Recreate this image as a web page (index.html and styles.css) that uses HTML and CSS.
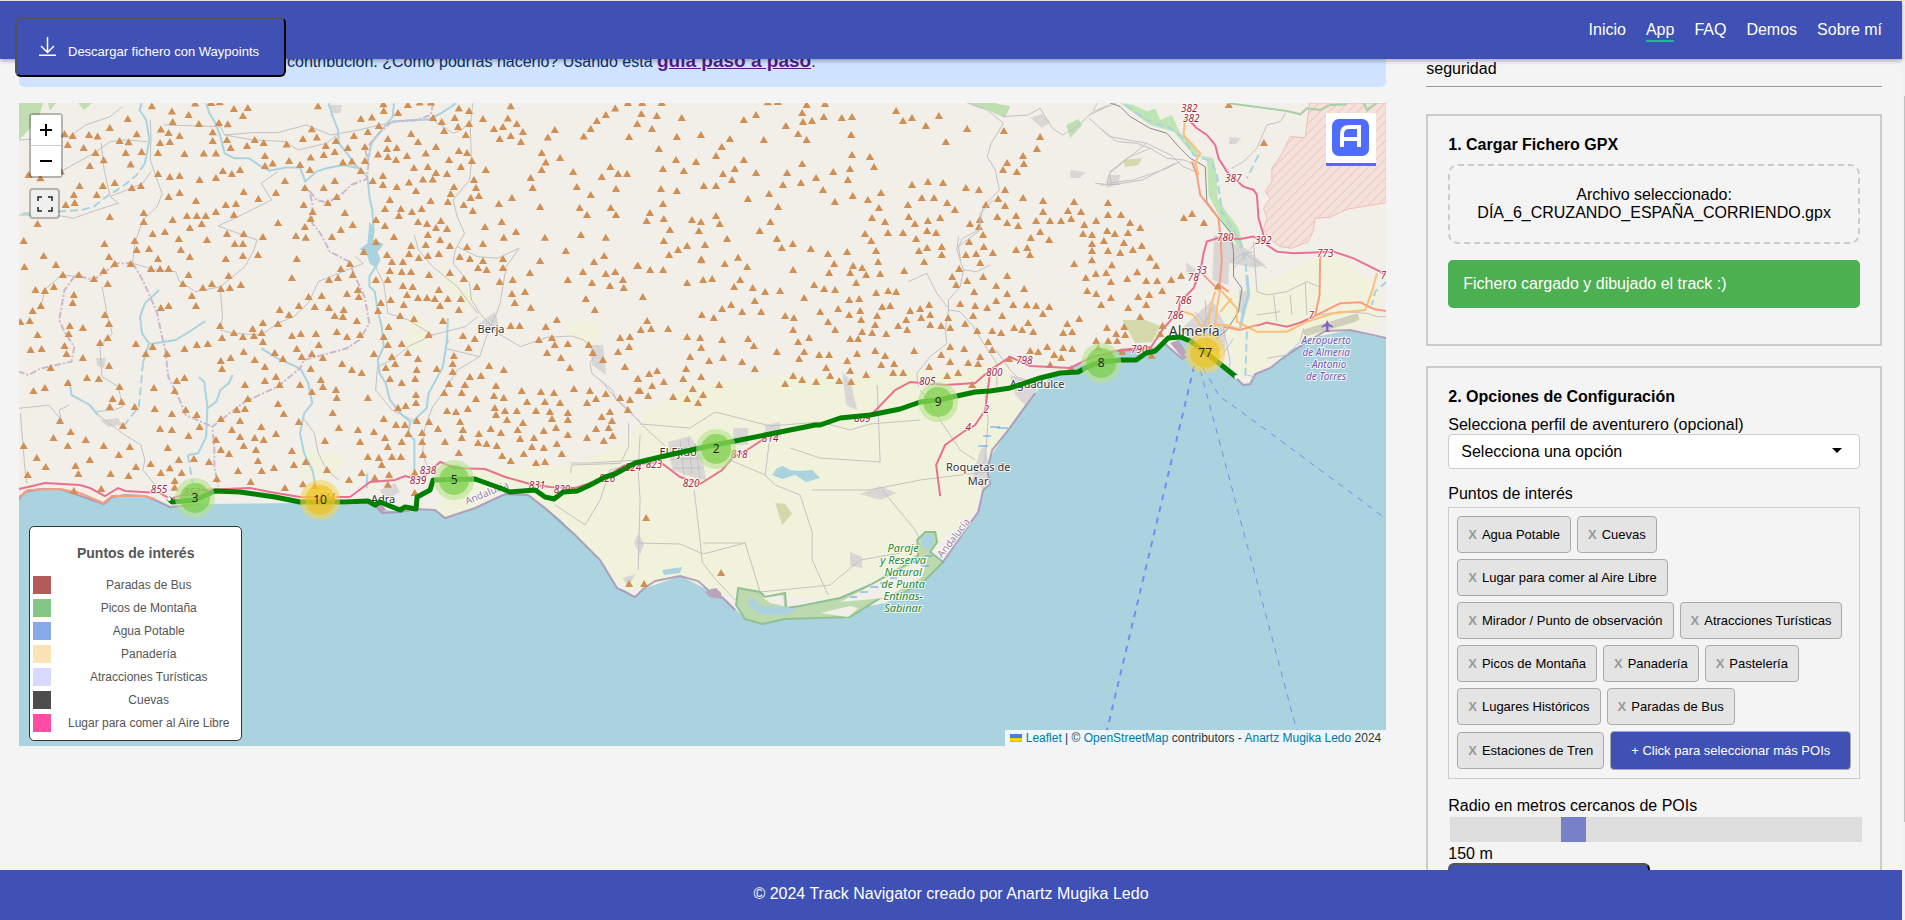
FILE: index.html
```html
<!DOCTYPE html>
<html lang="es">
<head>
<meta charset="utf-8">
<title>Track Navigator</title>
<link rel="stylesheet" href="styles.css">
</head>
<body>
<header class="topbar">
  <button class="btn download" type="button">
    <svg class="download-icon" viewBox="0 0 17 19" aria-hidden="true"><path d="M8.5 0V15M2 9L8.5 15.500L15 9M0 18.200H17"/></svg>
    <span>Descargar fichero con Waypoints</span>
  </button>
  <nav class="nav">
    <a href="#inicio">Inicio</a>
    <a href="#app" class="active">App</a>
    <a href="#faq">FAQ</a>
    <a href="#demos">Demos</a>
    <a href="#sobre">Sobre mí</a>
  </nav>
</header>

<main class="layout">
  <section class="left">
    <div class="notice">contribución. ¿Cómo podrías hacerlo? Usando esta <a href="#guia">guía paso a paso</a>.</div>
    <div class="map">
      <svg class="map-canvas" viewBox="19 103 1367 643" preserveAspectRatio="xMidYMid slice" role="img" aria-label="Mapa del track">
        <defs>
          <marker id="peakA" markerUnits="userSpaceOnUse" markerWidth="24" markerHeight="24" overflow="visible"><path class="peak" d="M0 -11L10 10H-10Z"/></marker>
          <marker id="peakC" markerUnits="userSpaceOnUse" markerWidth="24" markerHeight="24" overflow="visible"><path class="peak" d="M0 -11L12 10H-12Z"/></marker>
          <marker id="peakP" markerUnits="userSpaceOnUse" markerWidth="8" markerHeight="8" overflow="visible"><path class="peak" d="M0 -4L4 3H-4Z"/></marker>
          <pattern id="hatch" width="20" height="20" patternUnits="userSpaceOnUse" patternTransform="rotate(45)"><rect width="20" height="20" fill="#f2e2da"/><rect width="3" height="20" fill="#f5c4c0"/></pattern>
        </defs>
        <rect class="sea" x="19" y="103" width="1367" height="643"/>
        <path class="land" d="M19 103H1386V338L1375 337L1350 330L1325 331L1305 343L1290 350L1280 360L1270 368L1255 374L1250 384L1243 385L1235 377L1222 366L1205 356L1190 341L1176 339L1186 356L1182 359L1165 344L1150 348L1110 352L1095 360L1075 366L1050 377L1035 393L1020 412L1008 430L992 450L987 470L990 484L983 490L978 512L965 530L942 563L930 574L905 593L885 603L865 607L848 618L830 614L785 619L762 624L748 621L738 612L722 597L708 590L698 581L680 576L655 581L643 589L635 597L625 590L617 588L600 560L575 535L560 519L545 508L528 495L505 494L475 508L460 514L445 518L435 510L415 509L400 512L386 510L382 513L372 503L345 505L300 503L200 504L170 507L155 500L145 496L125 495L112 497L104 504L90 498L75 494L60 489L40 489L25 492L19 499Z"/>
        <path class="farm" d="M500 494L528 495L560 519L600 560L625 590L643 589L680 576L722 597L742 590L830 600L920 560L975 510L985 465L1030 395L1000 360L960 372L900 370L840 378L780 375L690 386L650 410L620 445L570 465L470 470L435 508L445 517L475 508Z"/>
        <path class="farm" d="M565 325L595 320L602 335L590 345L570 340ZM440 260L460 285L480 300L470 310L445 285ZM410 310L432 330L425 350L405 350ZM300 450L345 455L335 475L300 480ZM1215 300L1270 280L1330 250L1380 290L1375 325L1300 340L1260 370L1240 375Z"/>
        <path class="wood" d="M19 103H43L38 120L19 140ZM48 103H56L50 111ZM78 103H92L84 110Z"/>
        <path class="wood" d="M967 103L985 109L1005 118L1010 106L990 103ZM1066 125L1078 119L1082 125L1070 138Z"/>
        <path class="scrub" d="M1122 320L1145 320L1160 326L1152 342L1135 343ZM775 503L785 504L792 514L782 525ZM1123 160L1142 158L1138 165L1125 167Z"/>
        <path class="urban" d="M668 442L690 436L702 455L706 480L695 478L672 470ZM733 428H748V445H733ZM765 425L780 422L781 437L765 440ZM590 345L603 345L606 375L592 365ZM478 324L495 312L500 330L490 332ZM985 445L990 475L984 490L972 480L980 450ZM1010 375L1030 380L1040 385L1025 405L1015 395ZM842 372L850 380L857 410L846 405ZM860 494L880 486L896 493L880 500ZM638 533L644 544L640 555L634 543ZM636 574L628 586L622 578ZM380 490L395 483L400 492L385 500ZM1220 238L1245 248L1265 265L1255 268L1225 262ZM1214 235L1230 240L1228 285L1212 280ZM1239 290L1248 292L1245 315L1238 312ZM1180 330L1212 300L1225 325L1225 350L1205 352ZM1186 262L1196 270L1192 276L1186 272ZM1303 330L1354 314L1356 322L1306 336ZM1229 137L1241 138L1236 144L1229 144ZM1030 118L1042 114L1050 122L1042 128ZM330 105L342 105L340 113L332 113ZM96 358L106 358L104 368L97 366ZM100 420L118 418L122 425L108 427ZM1108 175L1120 175L1118 184L1106 188ZM850 552L862 557L862 568L850 566ZM1070 170L1085 172L1080 178L1070 178Z"/>
        <path class="water" d="M772 475L777 468L783 466L790 470L800 471L812 470L820 478L806 482L795 475L782 479Z"/>
        <path class="minor" d="M600 380L617 400L627 408L642 425L665 446M640 424L690 428L715 412L770 426L820 422L850 430L870 424L920 420M694 490L700 540L702 562L716 580L735 600M640 435L638 470L640 500L638 570M638 543L680 544L703 554L745 543L760 592M703 543L745 543M770 435L765 475L775 485L800 495L812 532L812 560L828 595M760 592L830 585L860 560L900 553M730 460L765 475M790 448L820 458L880 462M812 490L870 490L920 480L985 472M880 462L877 385M882 490L915 530L920 540M555 505L585 525L600 500L610 470L640 462M920 390L940 420L960 450L975 460M985 395L988 420L985 460L970 485M996 350L1010 370L1025 385M570 463L590 463L640 460"/>
        <path class="minor" d="M695 443L700 480M672 450L700 446M670 460L703 458M680 440L684 476M688 438L692 474M674 468L702 468M1180 330L1225 330M1195 312L1222 345M1215 305L1190 345M1205 300L1207 350"/>
        <path class="reserve" d="M738 588L760 592L765 597L785 593L786 608L800 606L840 598L870 585L905 565L918 555L917 540L925 532L935 532L937 542L930 552L943 562L925 580L905 592L880 598L850 617L785 619L762 624L745 619L736 605Z"/>
        <path class="dune" d="M763 598L783 595L784 606L770 603ZM820 613L850 606L858 608L848 617ZM840 602L900 570L928 556L922 577L885 598Z"/>
        <path class="water" d="M747 600L754 599L760 606L785 607L797 609L785 615L762 615L750 607ZM922 536L932 534L934 542L928 551L921 545ZM662 570L682 567L680 573L664 575Z"/>
        <path class="marsh" d="M850 597H857M860 592H868M870 587H878M880 583H886M890 578H897M900 571H908M908 562H916M925 556H932M921 566H929M978 446H988M983 436H991M990 427H1000M997 428H1008"/>
        <path class="coast" d="M1386 338L1350 330L1325 331L1305 343L1280 360L1270 368L1255 374L1250 384L1243 385L1235 377M1186 356L1182 359L1165 344M1035 393L1008 430L992 450L987 470L990 484L983 490L978 512L965 530L942 563M735 610L722 597L708 590L698 581L680 576L655 581L643 589L635 597L617 588L600 560L575 535L545 508L528 495L505 494L475 508L445 518L435 510L415 509L400 512L382 513L372 503M200 504L170 507L155 500L145 496L125 495L112 497L104 504L75 494L60 489L40 489L25 492L19 499"/>
        <path class="port" d="M705 592L711 589L716 588L721 593L722 599L715 598L709 597ZM380 502L386 510L382 513L376 506ZM1170 343L1178 340L1186 352L1183 359Z"/>
        <path class="secondary" d="M19 497L28 490L60 489L80 493L103 503L112 496L145 496L155 499"/>

        <g transform="translate(0 100) scale(.40816 .33333)">
          <path class="minor" d="M368 60L370 120L368 180L385 240L397 280L385 320L350 360L330 430L325 490M47 345L150 348L180 355L250 325L290 310L270 290L320 265L350 250L370 215M400 75L540 80L550 105L620 98L680 98L750 75L810 105L880 90L930 75L1000 60L1060 60L1110 100L1130 90L1150 70M1158 10L1152 80L1155 190L1150 240L1110 300L1120 350L1138 400L1115 450L1110 490L1150 550L1155 600L1175 640L1220 700L1275 740L1340 712L1400 708L1430 720L1460 760L1445 790L1450 820L1500 870L1510 900L1545 940L1568 965M1272 445L1240 500L1225 610L1215 645L1200 680L1175 770L1120 810L1085 880L1060 920L1040 985L1035 1060L1050 1110M250 560L265 660L275 700L245 740L250 830L290 860L300 920L280 930L230 935L300 1000L345 1035L355 1080L350 1110L378 1152M325 490L380 510L430 515L440 545L480 575L540 560L600 500L620 455L630 420L560 390L535 378L600 340L665 300L640 250L680 215M540 570L545 650L540 690L570 700L640 705L680 670L720 650L755 610L780 545L850 510L890 490L870 470M100 620L110 570L150 525L200 530M47 925L120 915L150 960L145 930L170 915M47 120L110 115L170 110L210 75L270 50L300 20M150 214L230 160L270 125L310 120L360 125M248 130L255 210L270 290M920 500L940 550L950 640L1000 660L1060 705L1140 680L1170 650M1060 705L1000 740L960 780L925 800L920 870L960 930L1010 960M1015 405L1025 450L1060 500L1120 560L1170 640M1120 440L1170 470L1220 475L1270 445M1540 970L1540 1040L1520 1090L1400 1095L1398 1120M550 105L620 120L700 125L730 150L800 130L830 100M740 950L770 1000L780 1060L800 1110L830 1140M1100 720L1090 745L1175 770M50 940L60 1090L65 1150"/>
          <path class="river" d="M347 10L342 30L358 60L362 90L366 120L355 190M505 10L513 40L528 70L540 110L550 160L575 175L610 175L640 200L660 212L700 203L735 203L748 245L775 215L800 205L840 195L880 205L900 230L905 290L912 330L915 380M920 500L905 530L905 560L918 575L925 630L935 680L940 740L925 780L930 820L945 850L955 900L985 945L1005 965L1000 1000L1015 1020L1015 1120M805 10L815 50L828 90L830 130L850 160L870 195L885 210M965 10L962 50L935 90L910 130L900 190M1118 10L1080 40L1050 58L960 65M390 570L355 610L343 650L348 700L365 730L350 790M503 663L470 690L430 720L368 732M640 745L680 775L720 797L737 808L755 850L765 910L745 940L735 1000L745 1060L765 1110L772 1150M487 832L500 845L508 920L505 1010L485 1060L460 1065M570 825L560 850L540 870L530 905L508 925M170 840L175 885L220 915L240 945M1097 655L1095 720L1085 800L1050 880L1045 925L1010 965M900 1120L898 1165"/>
          <path class="river dashed" d="M355 190L335 225L300 260L255 295L230 320L200 330L47 342M350 790L345 860L340 920L305 975M460 1065L472 1150"/>
          <path class="water" d="M905 365L918 385L915 420L940 432L925 455L932 480L922 505L905 490L898 460L880 448L900 430Z"/>
          <path class="admin" d="M1061 10L1055 45L1015 62L960 65L920 110L895 150L903 190L898 237L860 255L835 285L803 308L775 300L757 270L765 310L765 370L785 400L808 455L855 485L870 530L893 590L905 670L880 720L850 745L790 765L745 780L735 805L680 860L600 905L520 980L525 1040L525 1100L535 1160M325 490L345 530L368 590L385 640L395 700L405 750L412 830L440 900L455 945L520 980M325 490L285 490L230 540L185 525L158 570L145 660L160 700L182 740L175 785L100 805L70 825L47 815"/>
          <polyline class="peaksA" points="372,18 421,34 462,44 313,56 423,65 487,71 269,83 394,88 413,98 335,102 440,107 158,101 178,107 218,104 239,109 166,134 205,143 234,158 293,122 315,126 392,128 416,125 308,158 347,155 387,158 452,161 499,160 529,160 254,180 220,197 320,193 149,214 70,224 99,234 478,10 517,8 538,6 573,26 607,23 595,47 536,68 558,72 521,96 521,122 556,119 565,143 605,137 624,119 646,128 702,133 649,167 668,190 649,197 708,182 735,194 761,172 759,209 742,116 776,112 764,87 779,18 798,137 793,164 823,122 820,155 852,143 867,107 840,187 862,184 894,182 894,140 901,95 884,56 911,52 928,77 939,12 940,32 975,38 999,14 1028,7 1056,7 1061,53 1082,65 1088,92 1114,53 1124,25 1149,32 1122,80 1149,71 1141,104 1183,56 1251,18 1244,55 1210,86 1232,80 1266,71 1281,95 1224,116 1251,107 1276,125 1342,112 1359,89 1430,109 1447,86 1462,62 1484,44 1507,25 1538,8 1561,71 1541,110 950,116 926,163 948,146 972,143 950,170 970,179 997,167 1007,101 1024,125 1043,160 1068,140 1124,152 1144,158 1156,182 1100,179 1129,200 1190,209 1014,203 1048,200 1068,218 1095,221 1036,238 1060,238 1161,239 1166,263 1327,158 1372,173 1337,187 1327,209 1300,233 1305,263 1404,215 1413,260 1474,230 1495,200 1514,221 1536,221 1509,266 1447,284 1420,323 1438,344 1496,323 1509,344 1323,320 1254,293 1222,311 387,221 416,230 440,227 489,239 529,233 546,212 568,221 588,209 698,242 820,242 793,263 747,263 884,212 913,242 938,227 938,254 972,260 1002,247 1019,272"/>
          <polyline class="peaksA" points="195,257 252,257 281,248 323,263 345,257 181,284 237,284 161,314 183,308 269,350 92,371 413,290 440,278 480,302 597,275 633,296 676,278 553,314 578,311 529,335 573,344 458,347 482,347 504,347 352,338 352,365 423,359 465,383 494,371 744,314 766,335 761,356 747,380 803,308 825,290 845,338 864,374 835,389 813,410 725,407 749,412 681,368 955,299 943,326 982,326 1009,335 1033,326 977,347 921,359 943,377 965,410 921,425 1024,365 1046,371 1080,362 1068,383 1095,386 1048,404 1043,434 1078,419 1102,437 1007,437 1055,302 1097,305 1104,281 1112,260 1136,314 1153,293 1173,287 1158,332 1188,380 1229,365 1264,395 1234,412 1183,431 1144,440 1335,412 1386,452 1423,404 1484,412 1480,467 1455,485 1323,482 1298,518 1428,515 1391,539 1450,548 1484,521 1507,515 1526,539 1494,557 1528,563 1561,497 58,422 107,467 60,500 137,494 256,431 330,422 335,449 365,446 374,401 404,395 438,416 507,419 443,449 387,476 465,470 556,401 597,401 644,410 575,431 595,431 595,467 553,476 632,464 727,476 267,470 281,491 320,491 254,512 230,536 193,524 154,524 264,551 132,560 110,572 87,569 181,584 178,608 100,617 80,632 370,506 392,506 413,506 462,524 448,551 519,551 497,563 541,566 563,563 560,527 590,554 470,587 480,617 413,617 394,623 715,533 806,539 828,533 835,506 857,491 864,524 891,455 948,464 960,485 987,485 1002,461 1026,473 1048,467 1075,461 955,512 984,515 1007,515 1051,524 921,539 950,539 1102,518 1126,470 1151,476 1183,482 1232,476 1232,503 1171,503 1192,509 1136,536 1168,560 1224,545 1256,539 1254,581 1286,575 1261,608 1300,623 1435,596 1457,629"/>
          <polyline class="peaksA" points="987,557 1011,560 997,584 1075,569 1024,593 1046,593 1065,596 1097,596 1129,596 1078,617 1124,629 989,614 957,599 933,608 926,632 980,647 1014,656 952,680 1085,662 1050,704 940,710 950,734 984,731 877,569 879,590 850,581 788,587 756,590 732,617 771,620 806,623 842,629 820,647 840,650 874,662 685,629 708,644 681,671 644,668 619,686 641,698 622,707 595,710 573,698 544,713 539,677 644,725 715,707 737,701 774,701 825,695 850,710 882,704 727,746 781,734 50,665 73,662 92,704 171,677 203,683 168,701 257,644 267,671 264,713 245,728 75,749 102,746 158,737 163,761 203,773 124,803 333,731 374,740 357,761 409,761 452,746 482,734 509,731 267,797 213,833 242,836 166,848 82,872 110,863 293,860 276,896 298,905 269,920 330,920 377,863 433,842 452,833 428,872 455,929 379,926 421,941 482,944 147,962 301,977 173,995 131,1013 210,1019 166,1037 254,1037 58,1037 90,1073 112,1100 68,1124 291,1064 318,1040 220,1079 185,1097 192,1121 271,1121 315,1127 333,1100 369,1091 411,1043 392,986 421,989 489,980 462,1007 529,1019 541,956 588,962 580,929 600,926 607,896 681,911 695,941 600,854 541,782 544,806 565,773 597,755 624,779 649,800 673,758 693,776 739,770 764,761 791,773 761,806 676,830 649,842 685,854 735,854 786,839 791,860 764,875 823,869 825,893 901,893 815,938 732,965 640,980 676,1001 568,989 588,1010 624,1013 646,1019 597,1037 627,1049 541,1049 561,1061 512,1085 475,1076 438,1079 416,1104 394,1118 445,1118 428,1142 531,1136 583,1112 632,1082 641,1112 671,1103 614,1145 715,1052 749,1085 720,1094 796,1022 830,983 877,989 882,1025 916,995 940,956 970,974 992,974 1000,1001 943,1013 984,1025 950,1040 1034,998 1021,962 1051,965 1073,986 1090,1025 1034,1025 1036,1064 901,1070 928,1073 960,1070 982,1070 935,1094 801,1109 855,1139 953,1124 1016,1118 950,1153 698,1163 742,1152 771,1157 181,1172 248,1166 886,1118 428,1162 918,1133 1016,1178"/>
          <polyline class="peaksA" points="838,791 862,809 886,818 916,761 960,770 999,758 968,791 945,803 1024,776 1021,809 1070,806 955,836 984,848 1017,836 1019,884 1019,908 975,923 994,917 1112,767 1109,791 1109,815 1100,851 1139,854 1088,878 1131,878 1151,830 1178,827 1166,896 1198,797 1234,809 1215,857 1210,887 1234,893 1278,872 1325,875 1357,878 1291,905 1335,905 1372,908 1406,866 1445,872 1484,881 1438,908 1460,896 1519,893 1543,899 1564,872 1212,923 1215,944 1237,932 1266,932 1313,932 1347,935 1391,938 1391,959 1352,956 1281,968 1242,959 1146,926 1117,935 1095,932 1127,965 1134,989 1173,1001 1202,986 1227,998 1268,989 1332,992 1362,983 1308,1013 1274,1016 1391,1004 1364,1031 1332,1043 1303,1040 1283,1061 1251,1082 1230,1067 1217,1037 1192,1031 1171,1028 1131,1013 1124,1058 1376,1061 1335,1085 1313,1088 1474,950 1494,935 1538,929 1499,962 1491,983 1460,986 1501,1007 1438,1013 1479,1022 1134,707 1163,716 1148,743 1251,677 1273,677 1337,680 1364,659 1320,719 1352,713 1359,734 1391,731 1340,758 1374,773 1396,803 1442,734 1452,758 1477,779 1519,713 1543,710 1541,740 1514,755 1531,800 1562,836"/>
        </g>

        <g transform="translate(640 0) scale(.40816 .33333)">
          <path class="wood" d="M801 309L830 325L870 325L875 309Z"/>
          <path class="minor" d="M801 309L850 330L890 370L875 400L860 430L850 470L870 510L880 570L840 620L830 690L790 715L780 740L785 780M890 350L950 345L980 325L1010 385L1035 405L1070 380L1110 335L1150 315M1100 355L1150 410L1240 430L1300 465L1330 500L1360 515M1240 430L1180 490L1150 520L1155 555L1115 550M1155 555L1230 540L1310 490M1120 309L1110 330M1165 309L1100 345"/>
          <polyline class="peaksA" points="5,308 53,308 313,306 337,305 408,314 453,311 3,341 41,347 102,353 29,386 254,359 284,344 397,338 399,365 421,362 450,350 494,353 519,350 357,377 387,401 408,419 303,419 517,404 627,332 644,362 666,353 700,377 732,347 749,425 801,386 891,392 980,410 972,446 938,467 899,488 889,509 940,491 923,515 90,410 149,404 220,416 200,440 186,467 46,446 88,479 137,485 107,512 56,506 254,479 232,506 203,521 225,539 284,518 360,518 397,491 519,464 563,470 573,500 514,506 473,515 431,533 509,539 394,548 350,554 448,569 51,566 90,572 156,557 186,557 264,596 316,581 338,620 477,605 521,587 558,599 590,578 585,623 666,554 705,545 742,548 798,563 830,569 690,593 720,593 656,614 752,608 771,629 847,614 877,596 894,569 938,593 894,617 987,602 987,635 1063,605 1048,632 1080,635 1146,608 1146,644 1178,644 1442,314 1528,428 56,611 24,638 16,662 58,656 127,659 149,665 186,647 195,671 73,689 144,692 58,722 213,716 293,692 319,665 335,716 374,731 347,743 418,746 460,761 507,755 115,737 159,734 93,749 71,764 240,772 150,777 568,653 600,665 551,701 607,698 566,722 578,752 644,698 658,650 673,671 705,662 735,653 703,692 725,698 676,716 703,743 683,752 739,740 739,764 808,671 832,659 830,680 840,704 806,725 842,740 823,761 798,764 864,758 875,650 899,668 921,647 926,677 970,662 1004,662 1031,662 1056,656 980,695 957,713 1002,719 948,743 921,749 955,764 1088,674 1117,662 1085,701 1107,704 1144,692 1163,701 1195,698 1200,668 1225,683 1136,722 1107,731 1185,728 1229,737 1207,749 1176,758 1146,752 1107,752 1249,772 1332,653 1352,641 1381,668"/>
        </g>

        <g transform="translate(500 200) scale(.33333)">
          <path class="minor" d="M1375 110L1370 150L1390 210L1380 260L1345 300L1345 330L1380 335L1420 380L1450 430L1490 490L1490 560M1345 325L1310 280L1280 220L1225 245M1390 210L1430 215L1470 195M1345 330L1335 390L1340 430L1290 470L1250 520L1255 560M1480 0L1440 40L1440 90L1375 140"/>
          <polyline class="peaksC" points="603,180 674,191 741,200 414,197 450,209 489,209 561,248 609,239 636,236 720,239 702,260 758,263 795,275 840,272 879,209 764,302 693,314 666,326 641,353 605,344 726,335 783,335 428,290 441,362 422,389 453,386 504,386 561,410 600,413 666,419 603,443 744,416 761,437 570,470 627,482 669,473 726,485 764,506 830,455 558,506 603,530 549,536 471,512 447,521 491,545 456,557 414,536 420,572 444,587 519,590 561,596 578,566 609,584 594,608 657,554 855,347 881,353 879,389 927,413 894,425 912,455 897,476 957,464 987,464 978,503 990,527 948,545 906,539 879,527 855,551 1017,542 1053,545 1050,512 1041,482 1071,461 1098,524 1143,494 1155,467 1125,452 1182,491 1179,518 1209,518 1158,401 1116,398 1086,395 1074,416 1050,416 1005,389 984,365 960,335 1014,326 1047,344 1080,332 1083,359 1047,299 1077,296 1125,374 1131,347 1146,320 1170,317 1128,278 1164,272 1188,275 1068,248 1005,269 972,266 942,254 912,293 987,218 1002,191 1050,218 1059,197 1086,203 1098,224 1140,221 1134,185 1212,212 1272,185 1230,332 1260,326 1287,314 1290,344 1263,353 1218,359 1194,377 1221,389 1290,374 1323,377 1350,383 1344,353 1350,440 1323,464 1287,500 1242,452 1341,527 1374,518 1350,485 1392,446 1404,488 1434,491 1440,470 1476,449 1464,425 1431,392 1395,371 1419,347 1425,317 1461,323 1380,311 1422,275 1401,242 1368,254 1356,230 1377,206 1440,188 1449,230 1521,227 1488,257 1521,281 1488,302 1539,314 1506,347 1542,383 1503,398 1476,392 1416,554 1527,476"/>
        </g>

        <g transform="translate(1100 95) scale(.33333)">
          <path class="military" fill="url(#hatch)" d="M628 24H858V323L740 343L690 367L645 370L640 405L625 440L575 460L540 455L505 430L490 400L500 370L490 340L510 310L495 290L515 260L515 220L540 185L570 125L615 128Z"/>
          <path class="valley" d="M60 24L100 30L140 50L165 40L180 75L215 60L240 115L280 150L295 180L340 190L350 250L352 310L375 345L415 400L430 460L415 455L370 390L325 300L320 190L280 180L220 110L150 90Z"/>
          <path class="greenline" d="M380 24L560 48L600 58L620 40L660 45L690 30L740 28M790 24L800 45L830 24"/>
          <path class="minor" d="M0 100L50 140L110 145L150 160L200 190L250 195L290 210M555 55L540 80L500 90L470 160L430 200L395 220M150 160L80 190L30 230L20 265L100 255L200 220L240 200M0 270L60 268M460 440L470 590L500 600L560 590L620 560L655 575M520 600L530 680M615 560L620 660M470 660L540 650M575 660L570 600M440 480L500 520M390 500L420 480L460 470M470 440L400 520M655 660L720 650L800 655L830 665L858 665M610 700L600 740L560 780L500 790M370 700L390 800L380 860M330 650L310 700M400 730L360 790M440 840L460 845"/>
          <path class="rail" d="M30 24L60 35L90 65L150 100L200 115L240 160L270 190L315 215L320 320L360 375L390 410L400 470L400 545L425 580L415 650L380 705L350 730"/>
          <path class="river wide" d="M420 700L430 650L445 600L440 540"/>
          <path class="river dashed" d="M75 30L140 75L210 100L250 130L280 180L335 200L350 240L365 350L420 440L435 500L440 540M475 180L440 250M440 710L435 850M860 560L825 590L815 630"/>
          <path class="tertiary" d="M255 70L250 120L300 175L285 200L295 240M345 590L330 640L325 690L380 690L420 705M345 580L365 590L410 640L410 680L470 710L560 710L620 680L700 655L795 645L815 590L830 535M235 645L280 660L300 690L350 710M360 580L350 640L345 690M395 610L360 650"/>
          <path class="secondary" d="M275 200L290 240L300 300L355 370L360 420L365 500L358 570L385 590M300 530L345 575M660 475L658 600L645 660M370 695L420 705L470 690M640 665L720 625L780 622L820 642L858 648"/>
          <path class="motorway" d="M265 75L290 100L320 120L345 150L355 190L380 230L400 250L430 275L460 285L470 300L475 370L490 420L500 450L530 470L580 475L700 470L760 490L840 530L858 540M490 440L460 425L420 432L350 430L320 440L310 475L300 530L280 580L240 620L235 650L190 700L150 760L30 770M470 692L500 683L560 695L600 683L640 665"/>
          <path class="runway" d="M610 715L775 665"/>
          <path class="plane" d="M681 675L686 686L698 694V698L685 694L684 704L689 710H673L678 704L677 694L664 698V694L676 686Z"/>
        </g>

        <g transform="translate(900 260) scale(.33333)">
          <polyline class="peaksC" points="372,86 380,135 408,137 447,140 428,161 384,188 366,209 399,215 537,176 501,191 516,215 489,218 390,272 414,275 441,260 462,284 489,263 516,266 483,293 450,314 522,11 575,0 635,15 587,41 618,38 557,53 632,65 561,92 588,101 632,113 603,134 681,56 711,36 738,62 768,17 771,62 813,59 843,47 786,92 747,104 714,110 738,134 684,143 720,170 620,203 672,200 648,221 675,224 588,242 624,242 651,242 594,262 666,275 754,286 513,326 787,197 780,221 953,78"/>
        </g>
        <polyline class="peaksP" points="646,518 721,573 629,584 644,584"/>

        <path class="motorway" d="M19 489L45 483L80 485L90 488L105 496L118 488L125 491L160 493L170 499L200 490L250 488L270 492L300 497L350 497L370 482L395 480L405 476L420 480L440 462L455 468L485 469L505 477L530 484L550 487L575 488L600 480L625 465L660 462L680 477L700 484L722 470L732 458L750 448L765 438M868 418L895 390L910 382L945 385L975 383L990 370L1010 357L1030 366L1070 368L1090 358L1120 350L1150 347M990 372L985 410L975 425L963 432L945 445L936 465L940 496"/>
        <path class="ferry wide" d="M1194 366L1103 746"/>
        <path class="ferry" d="M1200 370L1297 732M1203 368L1219 396L1258 424L1386 519"/>

        <g class="road-no">
          <text x="1189" y="112">382</text><text x="1191" y="122">382</text><text x="1233" y="182">387</text><text x="1225" y="241">780</text><text x="1263" y="244">392</text><text x="1325" y="257">773</text><text x="1386" y="279">76</text><text x="1201" y="274">33</text><text x="1193" y="281">78</text><text x="1183" y="304">786</text><text x="1175" y="319">786</text><text x="1139" y="353">790</text><text x="1311" y="319">7</text><text x="1024" y="364">798</text><text x="994" y="376">800</text><text x="927" y="385">805</text><text x="986" y="413">2</text><text x="968" y="431">4</text><text x="862" y="422">809</text><text x="770" y="442">814</text><text x="739" y="458">818</text><text x="691" y="487">820</text><text x="654" y="468">823</text><text x="633" y="471">824</text><text x="607" y="482">826</text><text x="562" y="493">829</text><text x="537" y="489">831</text><text x="428" y="474">838</text><text x="418" y="484">839</text><text x="159" y="493">855</text><text x="192" y="496">852</text><text x="327" y="501">844</text>
        </g>
        <g class="town">
          <text x="491" y="333">Berja</text><text x="678" y="456">El Ejido</text><text x="383" y="503">Adra</text><text x="1037" y="388">Aguadulce</text><text x="978" y="471">Roquetas de</text><text x="978" y="485">Mar</text>
          <text class="city" x="1194" y="336">Almería</text>
        </g>
        <g class="region"><text transform="translate(488 496) rotate(-22)">Andalucía</text><text transform="translate(956 540) rotate(-52)">Andalucía</text></g>
        <g class="park">
          <text x="903" y="552">Paraje</text><text x="903" y="564">y Reserva</text><text x="903" y="576">Natural</text><text x="903" y="588">de Punta</text><text x="903" y="600">Entinas-</text><text x="903" y="612">Sabinar</text>
        </g>
        <g class="airport">
          <text x="1326" y="344">Aeropuerto</text><text x="1326" y="356">de Almería</text><text x="1326" y="368">- Antonio</text><text x="1326" y="380">de Torres</text>
        </g>

        <path class="track" d="M168 498L172 502L195 500L215 491L240 492L275 497L300 502L345 502L368 501L375 505L380 502L400 510L405 507L416 509L417 497L430 490L433 480L475 479L500 488L510 492L535 490L545 497L554 499L563 492L577 491L590 485L605 477L615 474L635 463L660 457L700 448L770 434L785 431L815 425L820 425L840 418L870 415L900 409L920 402L938 400L975 392L990 391L1010 388L1040 378L1060 373L1078 372L1085 368L1100 362L1120 360L1136 360L1146 353L1155 351L1168 338L1180 337L1190 341L1205 352L1236 377"/>
        <circle class="stop" cx="169" cy="499" r="2"/><circle class="stop" cx="1236" cy="377" r="2"/>

        <g class="cluster">
          <g transform="translate(195 498)"><circle class="halo" r="20"/><circle class="core" r="15"/><text y="4">3</text></g>
          <g class="medium" transform="translate(320 500)"><circle class="halo" r="20"/><circle class="core" r="15"/><text y="4">10</text></g>
          <g transform="translate(454 480)"><circle class="halo" r="20"/><circle class="core" r="15"/><text y="4">5</text></g>
          <g transform="translate(716 449)"><circle class="halo" r="20"/><circle class="core" r="15"/><text y="4">2</text></g>
          <g transform="translate(938 402)"><circle class="halo" r="20"/><circle class="core" r="15"/><text y="4">9</text></g>
          <g transform="translate(1101 363)"><circle class="halo" r="20"/><circle class="core" r="15"/><text y="4">8</text></g>
          <g class="medium" transform="translate(1205 353)"><circle class="halo" r="20"/><circle class="core" r="15"/><text y="4">77</text></g>
        </g>
      </svg>

      <div class="map-tools">
        <div class="zoom-ctl">
          <button type="button" aria-label="Acercar"><svg viewBox="0 0 12 12"><path d="M6 0V12M0 6H12"/></svg></button>
          <button type="button" aria-label="Alejar"><svg viewBox="0 0 12 12"><path d="M0 6H12"/></svg></button>
        </div>
        <button class="full-ctl" type="button" aria-label="Pantalla completa"><svg viewBox="0 0 16 16"><path d="M1 5V1H5M11 1H15V5M15 11V15H11M5 15H1V11"/></svg></button>
      </div>
      <a class="map-logo" href="#anartz" aria-label="Anartz Mugika">
        <svg viewBox="0 0 37 37"><rect width="37" height="37" rx="7"/><path d="M10 28V15Q10 8 17 8H27V28M10 20H27"/></svg>
      </a>
      <aside class="legend">
        <h4>Puntos de interés</h4>
        <ul>
          <li><i class="sw bus"></i><span>Paradas de Bus</span></li>
          <li><i class="sw peaks"></i><span>Picos de Montaña</span></li>
          <li><i class="sw drink"></i><span>Agua Potable</span></li>
          <li><i class="sw bakery"></i><span>Panadería</span></li>
          <li><i class="sw sights"></i><span>Atracciones Turísticas</span></li>
          <li><i class="sw caves"></i><span>Cuevas</span></li>
          <li><i class="sw picnic"></i><span>Lugar para comer al Aire Libre</span></li>
        </ul>
      </aside>
      <div class="attribution"><svg viewBox="0 0 12 8" aria-hidden="true"><path fill="#4C7BE1" d="M0 0h12v4H0z"/><path fill="#FFD500" d="M0 4h12v3H0z"/><path fill="#E0BC00" d="M0 7h12v1H0z"/></svg> <a href="#leaflet">Leaflet</a> | © <a href="#osm">OpenStreetMap</a> contributors - <a href="#aml">Anartz Mugika Ledo</a> 2024</div>
    </div>
  </section>

  <section class="right">
    <p class="intro">Respeta la guía de ruta en todo momento, con calma y seguridad</p>
    <hr>
    <div class="card upload">
      <h3>1. Cargar Fichero GPX</h3>
      <div class="drop">Archivo seleccionado: DÍA_6_CRUZANDO_ESPAÑA_CORRIENDO.gpx</div>
      <div class="ok">Fichero cargado y dibujado el track :)</div>
    </div>
    <div class="card">
      <h3>2. Opciones de Configuración</h3>
      <label for="perfil">Selecciona perfil de aventurero (opcional)</label>
      <div class="select-wrap">
        <select id="perfil"><option>Selecciona una opción</option></select>
        <svg viewBox="0 0 10 5" aria-hidden="true"><path d="M0 0H10L5 5Z"/></svg>
      </div>
      <div class="field-name">Puntos de interés</div>
      <div class="chips">
        <button type="button" class="chip"><b>X</b>Agua Potable</button>
        <button type="button" class="chip"><b>X</b>Cuevas</button>
        <button type="button" class="chip"><b>X</b>Lugar para comer al Aire Libre</button>
        <button type="button" class="chip"><b>X</b>Mirador / Punto de observación</button>
        <button type="button" class="chip"><b>X</b>Atracciones Turísticas</button>
        <button type="button" class="chip"><b>X</b>Picos de Montaña</button>
        <button type="button" class="chip"><b>X</b>Panadería</button>
        <button type="button" class="chip"><b>X</b>Pastelería</button>
        <button type="button" class="chip"><b>X</b>Lugares Históricos</button>
        <button type="button" class="chip"><b>X</b>Paradas de Bus</button>
        <button type="button" class="chip"><b>X</b>Estaciones de Tren</button>
        <button type="button" class="more">+ Click para seleccionar más POIs</button>
      </div>
      <label for="radio">Radio en metros cercanos de POIs</label>
      <input id="radio" type="range" min="10" max="500" value="150">
      <output for="radio">150 m</output>
      <button class="btn search" type="button" aria-label="Buscar"></button>
    </div>
  </section>
</main>

<footer class="footer">© 2024 Track Navigator creado por Anartz Mugika Ledo</footer>
<div class="scrollbar"><div class="thumb"></div></div>
</body>
</html>
```

FILE: styles.css
```css
* { box-sizing: border-box; }
html, body { height: 100%; overflow: hidden; }
body {
  margin: 0;
  border-top: 1px solid #efe0e0;
  padding-right: 3px;
  background: #f4f4f4;
  color: #000;
  font: 16px/18px "Liberation Sans", Arial, sans-serif;
  position: relative;
}
button, select, input { font-family: inherit; }

.topbar {
  position: absolute; top: 0; left: 0; right: 3px; z-index: 20;
  height: 58px;
  display: flex; justify-content: space-between; align-items: flex-start;
  padding: 16px 20px 0 15px;
  background: #3f51b5;
  box-shadow: 0 2px 4px rgba(0,0,0,.3);
}
.btn { background: #3f51b5; color: #fff; border: 2px outset #000; border-radius: 6px; }
.download {
  display: flex; align-items: flex-end; gap: 12px;
  height: 60px; padding: 0 25px 15px 22px;
  font-size: 13px; line-height: 16px;
}
.download-icon { width: 17px; height: 19px; fill: none; stroke: #fff; stroke-width: 1.5; margin-bottom: 4px; }
.nav { display: flex; gap: 20px; padding-top: 3px; }
.nav a { color: #fff; text-decoration: none; line-height: 20px; }
.nav .active { border-bottom: 2px solid #1abc9c; }

.layout {
  height: 100%; overflow: hidden;
  display: grid; grid-template-columns: minmax(0, 3fr) minmax(0, 1fr); gap: 40px;
  padding: 40px 20px 0 19px;
}
.notice {
  padding: 7px 16px 13px 268px;
  background: #cfe2ff; color: #0a3069;
  border-radius: 5px; line-height: 25px; margin-bottom: 16px;
}
.notice a { color: #551a8b; font-weight: bold; font-size: 19px; }

.map { position: relative; height: calc(70vh - 1px); overflow: hidden; background: #aad3df; }
.map-canvas { display: block; width: 100%; height: 100%; }
.map-canvas path, .map-canvas polyline { vector-effect: non-scaling-stroke; }
.sea, .water { fill: #aad3df; }
.land { fill: #f2efe9; }
.farm { fill: #f1f2dc; }
.wood { fill: #c0deb2; }
.scrub { fill: #d3d9ab; }
.urban { fill: #d9d7d6; }
.port { fill: #b9a3bd; }
.dune { fill: #f2efe6; }
.reserve { fill: #bddaaf; stroke: #8fc193; stroke-width: 2; }
.valley { fill: #bfe5b5; }
.greenline { fill: none; stroke: #a9cfa5; stroke-width: 2; }
.marsh { fill: none; stroke: #4aa3f0; stroke-width: 1; }
.coast { fill: none; stroke: #a58fb0; stroke-width: 2; stroke-opacity: .8; }
.minor { fill: none; stroke: #c2c2c4; stroke-width: 1; }
.rail { fill: none; stroke: #8a8a8a; stroke-width: 1; }
.river { fill: none; stroke: #aad3df; stroke-width: 2; }
.river.wide { stroke-width: 3; }
.river.dashed { stroke-dasharray: 8 4; }
.admin { fill: none; stroke: #cdb8ce; stroke-width: 2; stroke-dasharray: 7 2 2 2; }
.military { stroke: #f0bdb8; stroke-width: 1; }
.tertiary { fill: none; stroke: #fbbf78; stroke-width: 2; }
.secondary { fill: none; stroke: #f99d80; stroke-width: 2; }
.motorway { fill: none; stroke: #e8718f; stroke-width: 2; }
.runway { fill: none; stroke: #d0d0ba; stroke-width: 7; }
.plane { fill: #8461c4; }
.peak { fill: #d08f55; }
.peaksA, .peaksC, .peaksP { fill: none; stroke: none; }
.peaksA { marker: url(#peakA); }
.peaksC { marker: url(#peakC); }
.peaksP { marker: url(#peakP); }
.ferry { fill: none; stroke: #7b88f5; stroke-width: 1; stroke-dasharray: 6 6; }
.ferry.wide { stroke-width: 2; }
.track { fill: none; stroke: #008000; stroke-width: 5; stroke-linejoin: round; }
.stop { fill: #fff; }
.map-canvas text { font-family: "Noto Sans", sans-serif; text-anchor: middle; paint-order: stroke; stroke: #fff; stroke-width: 2px; stroke-opacity: .8; stroke-linejoin: round; }
.road-no text { font-size: 10px; font-style: italic; fill: #a02540; }
.town text { font-size: 11px; fill: #333; }
.town .city { font-size: 14px; }
.region text { font-size: 10px; fill: #9a80a5; }
.park text { font-size: 11px; font-style: italic; fill: #1f8a2e; }
.airport text { font-size: 10px; font-style: italic; fill: #7657b5; }
.halo { fill: rgba(181,226,140,.6); }
.core { fill: rgba(110,204,57,.6); }
.medium .halo { fill: rgba(241,211,87,.6); }
.medium .core { fill: rgba(240,194,12,.6); }
.map-canvas .cluster text { font-family: "Open Sans", sans-serif; font-size: 12px; stroke: none; fill: #222; }

.map-tools { position: absolute; left: 10px; top: 10px; display: flex; flex-direction: column; align-items: flex-start; gap: 10px; }
.zoom-ctl { display: flex; flex-direction: column; border: 2px solid rgba(0,0,0,.25); border-radius: 4px; background-clip: padding-box; }
.zoom-ctl button { width: 30px; height: 30px; padding: 0; border: 0; background: #fff; display: grid; place-items: center; }
.zoom-ctl button:first-child { height: 31px; border-bottom: 1px solid #ccc; }
.zoom-ctl svg { width: 12px; height: 12px; stroke: #000; stroke-width: 2; }
.full-ctl { width: 31px; height: 31px; padding: 0; display: grid; place-items: center; background: #efefef; background-clip: padding-box; border: 2px solid rgba(0,0,0,.25); border-radius: 4px; }
.full-ctl svg { width: 16px; height: 16px; fill: none; stroke: #222; stroke-width: 1.5; }
.map-logo { position: absolute; right: 10px; top: 10px; width: 50px; height: 53px; padding: 6px; background: #fff; border-bottom: 3px solid #4f6cff; }
.map-logo svg { display: block; width: 37px; height: 37px; fill: #4f6cff; }
.map-logo path { fill: none; stroke: #fff; stroke-width: 4; }

.legend {
  position: absolute; left: 10px; bottom: 5px;
  padding: 22px 3px 3px; border: 1px solid #333; border-radius: 5px;
  background: #fff; color: #555; text-align: center;
}
.legend h4 { margin: 0 0 18px; font-size: 14px; line-height: 9px; }
.legend ul { list-style: none; margin: 0; padding: 0; }
.legend li { display: flex; align-items: center; font-size: 12px; line-height: 18px; margin-bottom: 5px; }
.legend span { flex: 1; padding: 0 9px 0 17px; }
.sw { width: 18px; height: 18px; }
.bus { background: #b55a5a; }
.peaks { background: #82c785; }
.drink { background: #88a9e8; }
.bakery { background: #fae3b4; }
.sights { background: #d9d9ff; }
.caves { background: #4d4d4d; }
.picnic { background: #ff4da3; }
.attribution { position: absolute; right: 0; bottom: 0; padding: 0 5px; background: rgba(255,255,255,.8); color: #333; font-size: 12px; line-height: 16px; }
.attribution svg { width: 12px; height: 8px; }
.attribution a { color: #0078a8; text-decoration: none; }

.intro { margin: 1px 0 8px; }
hr { margin: 0 0 27px; border: 0; border-top: 1px solid #999; }
.card { border: 2px solid #ccc; padding: 20px; margin-bottom: 20px; }
.card h3 { margin: 0 0 10px; font-size: 16px; line-height: 18px; }
.upload { padding-bottom: 36px; }
.drop { border: 2px dashed #ccc; border-radius: 10px; padding: 20px; text-align: center; margin-bottom: 16px; }
.ok { background: #4caf50; color: #fff; border-radius: 5px; padding: 15px; }
.card label, .field-name { display: block; }
.select-wrap { position: relative; margin-bottom: 16px; }
.select-wrap select {
  appearance: none; display: block; width: 100%; height: 35px; padding: 0 12px;
  background: #fff; border: 1px solid #ccc; border-radius: 4px; font-size: 16px; color: #000;
}
.select-wrap svg { position: absolute; right: 18px; top: 14px; width: 10px; height: 5px; }
.chips { display: flex; flex-wrap: wrap; align-items: center; gap: 6px; padding: 8px 4px 8px 8px; margin: 4px 0 18px; border: 1px solid #ccc; }
.chip { height: 37px; padding: 0 10px; background: #e4e4e4; border: 1px solid #aaa; border-radius: 4px; font-size: 13px; color: #000; }
.chip b { color: #999; margin-right: 5px; }
.more { height: 39px; padding: 0 20px; background: #3f51b5; color: #fff; border: 1px solid #aaa; border-radius: 4px; font-size: 13px; }
input[type=range] { appearance: none; display: block; width: 100%; height: 25px; margin: 2px; background: #ddd; }
input[type=range]::-webkit-slider-thumb { appearance: none; width: 25px; height: 25px; background: #7681c8; }
output { display: block; margin: 3px 0 0; }
.search { width: 202px; height: 44px; display: block; }

.footer {
  position: absolute; left: 0; right: 3px; bottom: 0; z-index: 15;
  height: 50px; padding: 15px; text-align: center; background: #3f51b5; color: #fff;
}
.scrollbar { position: absolute; top: 0; right: 0; bottom: 0; width: 3px; background: #f1f1f1; }
.thumb { width: 1px; height: 79%; margin: 95px 0 0 auto; background: #c1c1c1; }
```
